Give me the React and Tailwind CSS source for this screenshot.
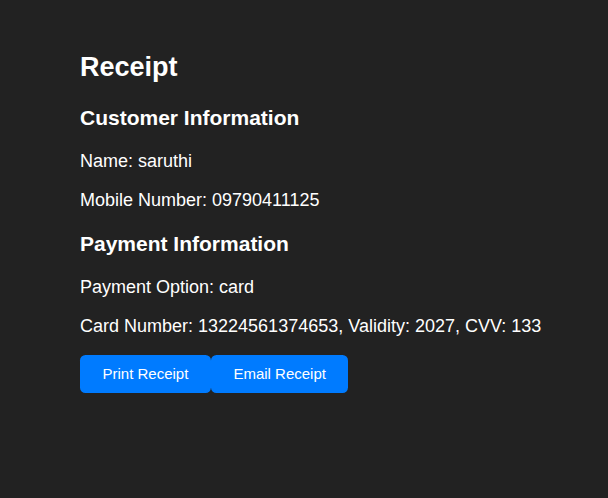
import React from 'react';

const customer = { name: 'saruthi', mobile: '09790411125' };
const payment = { option: 'card', cardNumber: '13224561374653', validity: '2027', cvv: '133' };

export default function App() {
  return (
    <div className="min-h-[498px] bg-[#222222] pl-20 pr-5 pt-[52px] text-white font-['Liberation_Sans',Arial,sans-serif]">
      <h2 className="text-[27px] leading-[31px] font-bold">Receipt</h2>

      <h3 className="mt-[23px] text-[21px] leading-[24px] font-bold">Customer Information</h3>
      <p className="mt-[21px] text-[18px] leading-[21px]">Name: {customer.name}</p>
      <p className="mt-[18px] text-[18px] leading-[21px]">Mobile Number: {customer.mobile}</p>

      <h3 className="mt-[21px] text-[21px] leading-[24px] font-bold">Payment Information</h3>
      <p className="mt-[21px] text-[18px] leading-[21px]">Payment Option: {payment.option}</p>
      <p className="mt-[18px] text-[18px] leading-[21px]">
        Card Number: {payment.cardNumber}, Validity: {payment.validity}, CVV: {payment.cvv}
      </p>

      <div className="mt-[18px] flex">
        <button className="h-[38px] px-[22.5px] rounded-[5.5px] bg-[#007bff] text-[15px] text-white">
          Print Receipt
        </button>
        <button className="h-[38px] px-[22.5px] rounded-[5.5px] bg-[#007bff] text-[15px] text-white">
          Email Receipt
        </button>
      </div>
    </div>
  );
}
